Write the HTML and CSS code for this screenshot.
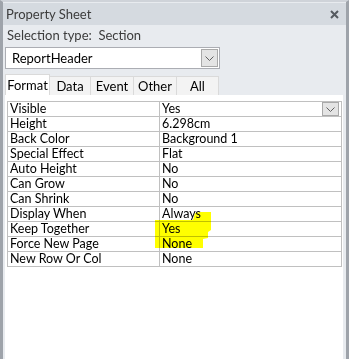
FILE: index.html
```html
<!DOCTYPE html>
<html lang="en">
<head>
  <meta charset="UTF-8" />
  <title>Property Sheet</title>
  <link rel="stylesheet" href="styles.css">
</head>
<body>
  <div class="pane">
    <div class="titlebar">
      <span>Property Sheet</span>
      <svg class="close" width="9" height="9" viewBox="0 0 9 9">
        <path d="M1 1 L8 8 M8 1 L1 8" stroke="#555a60" stroke-width="2" />
      </svg>
    </div>

    <div class="selection">Selection type:&nbsp; Section</div>

    <div class="combo">
      <span>ReportHeader</span>
      <div class="drop">
        <svg width="9" height="5" viewBox="0 0 9 5"><path d="M0.5 0.5 L4.5 4.5 L8.5 0.5" fill="none" stroke="#606060" /></svg>
      </div>
    </div>

    <div class="tabs">
      <div class="tab active">Format</div>
      <div class="tab">Data</div>
      <div class="tab">Event</div>
      <div class="tab">Other</div>
      <div class="tab">All</div>
    </div>

    <div class="sheet">
      <table class="props">
        <tr><td>Visible</td><td class="has-drop">Yes<div class="drop small"><svg width="9" height="5" viewBox="0 0 9 5"><path d="M0.5 0.5 L4.5 4.5 L8.5 0.5" fill="none" stroke="#606060" /></svg></div></td></tr>
        <tr><td>Height</td><td>6.298cm</td></tr>
        <tr><td>Back Color</td><td>Background 1</td></tr>
        <tr><td>Special Effect</td><td>Flat</td></tr>
        <tr><td>Auto Height</td><td>No</td></tr>
        <tr><td>Can Grow</td><td>No</td></tr>
        <tr><td>Can Shrink</td><td>No</td></tr>
        <tr><td>Display When</td><td>Always</td></tr>
        <tr><td>Keep Together</td><td>Yes</td></tr>
        <tr><td>Force New Page</td><td>None</td></tr>
        <tr><td>New Row Or Col</td><td>None</td></tr>
      </table>

      <!-- marker scribble drawn over the grid -->
      <svg class="marker" width="60" height="40" viewBox="0 0 60 40">
        <path d="M0 8 L38 8 L40 1 L45 0 L56 0 L56 18 L53 20 L53 26 L48 27 L48 36 L0 36 Z" fill="#ffff00" />
      </svg>
    </div>
  </div>
</body>
</html>
```

FILE: styles.css
```css
html, body {
  margin: 0;
  height: 100%;
}

body {
  font-family: Lato, "Liberation Sans", sans-serif;
  font-size: 12.5px;
  color: #000;
  background: #e8ebef;
}

.pane {
  box-sizing: border-box;
  height: 359px;
  display: flex;
  flex-direction: column;
  background: #e8ebef;
  border-top: 2px solid #cfd3d9;
  border-left: 3px solid #9ea3aa;
  border-right: 3px solid #9ea3aa;
}

.titlebar {
  height: 22px;
  margin-top: 1px;
  background: #d5dae0;
  display: flex;
  align-items: center;
  justify-content: space-between;
  padding: 0 7px 0 3px;
  color: #3c3c3c;
  font-size: 13px;
}

.close {
  display: block;
}

.selection {
  height: 19px;
  line-height: 19px;
  padding: 0 0 0 4px;
  margin-top: 1px;
  color: #3c3c3c;
  font-size: 13px;
}

.combo {
  box-sizing: border-box;
  width: 215px;
  height: 22px;
  margin: 2px 0 0 2px;
  background: #fff;
  border: 1px solid #abadb3;
  display: flex;
  align-items: center;
  justify-content: space-between;
  padding-left: 6px;
  font-size: 13px;
}

.drop {
  box-sizing: border-box;
  width: 17px;
  height: 18px;
  margin-right: 1px;
  background: #e4e4e4;
  border: 1px solid #a9a9a9;
  display: flex;
  align-items: center;
  justify-content: center;
}

.drop svg {
  display: block;
}

.tabs {
  display: flex;
  align-items: flex-end;
  height: 21px;
  margin: 5px 0 0 2px;
  font-size: 13px;
}

.tab {
  box-sizing: border-box;
  height: 19px;
  line-height: 18px;
  text-align: center;
  background: #f3f3f3;
  border: 1px solid #dadada;
  border-bottom: none;
  border-left: none;
}

.tab:nth-child(2) { width: 41px; }
.tab:nth-child(3) { width: 43px; }
.tab:nth-child(4) { width: 43px; }
.tab:nth-child(5) { width: 42px; }

.tab.active {
  height: 21px;
  line-height: 20px;
  width: 45px;
  background: #fff;
  border-left: 1px solid #dadada;
}

.sheet {
  position: relative;
  flex: 1;
  background: #fff;
  margin: 0 3px 0 2px;
  padding: 6px 0 0 2px;
}

.props {
  border-collapse: collapse;
  width: 335px;
  table-layout: fixed;
}

.props td {
  box-sizing: border-box;
  height: 15px;
  padding: 0 0 0 2px;
  border: 1px solid #c0c0c0;
  line-height: 14px;
  white-space: nowrap;
  overflow: hidden;
}

.props td:first-child {
  width: 152px;
}

.has-drop {
  position: relative;
}

.drop.small {
  position: absolute;
  right: 1px;
  top: 0;
  width: 17px;
  height: 14px;
}

.marker {
  position: absolute;
  left: 150px;
  top: 117px;
  mix-blend-mode: multiply;
}
```
